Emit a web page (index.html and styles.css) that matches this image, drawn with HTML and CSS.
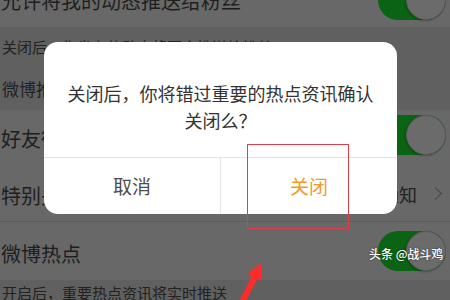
FILE: index.html
```html
<!DOCTYPE html>
<html lang="zh-CN">
<head>
<meta charset="utf-8">
<title>设置</title>
<link rel="stylesheet" href="styles.css">
</head>
<body>
<div class="screen">
  <div class="list">
    <div class="row row-top">
      <span class="title">允许将我的动态推送给粉丝</span>
      <span class="toggle"><span class="knob"></span></span>
    </div>
    <div class="note note-top">关闭后，你发布的动态将不会推送给粉丝</div>
    <div class="header">微博推送设置</div>
    <div class="row row-friend">
      <span class="title">好友微博</span>
      <span class="toggle"><span class="knob"></span></span>
    </div>
    <div class="row row-special">
      <span class="title">特别关注</span>
      <span class="extra">新微博通知<span class="chev"></span></span>
    </div>
    <div class="row row-hot">
      <span class="title">微博热点</span>
      <span class="toggle"><span class="knob"></span></span>
    </div>
    <div class="note note-bottom">开启后，重要热点资讯将实时推送</div>
  </div>

  <div class="dialog">
    <div class="message">关闭后，你将错过重要的热点资讯确认<br>关闭么？</div>
    <div class="actions">
      <div class="btn btn-cancel">取消</div>
      <div class="btn btn-ok">关闭</div>
    </div>
  </div>

  <div class="mark-box"></div>
  <svg class="arrow" width="450" height="300" viewBox="0 0 450 300">
    <line x1="254.7" y1="277.2" x2="239" y2="308" stroke="#ff2b2b" stroke-width="6"/>
    <polygon points="262,262 261.5,281 247.5,274" fill="#ff2b2b"/>
  </svg>
  <div class="watermark">头条 @战斗鸡</div>
</div>
</body>
</html>
```
FILE: styles.css
```css
html, body {
  margin: 0;
  padding: 0;
}
body {
  width: 450px;
  height: 300px;
  overflow: hidden;
  background: #666;
  font-family: "Noto Sans CJK SC", "Noto Sans", sans-serif;
}
.screen {
  position: relative;
  width: 450px;
  height: 300px;
  overflow: hidden;
}
.list {
  display: flex;
  flex-direction: column;
  margin-top: -27px;
}
.row {
  display: flex;
  align-items: center;
  justify-content: space-between;
  padding: 0 4px 0 1px;
  background: #686868;
  color: #1e1e1e;
}
.title {
  font-size: 20px;
  line-height: 24px;
}
.row-top { height: 54px; }
.row-top .title { margin-top: 2px; }
.row-friend { height: 50px; }
.row-friend .title { margin-top: 8px; }
.row-special { height: 61px; border-bottom: 1px solid #5c5c5c; }
.row-special .title { margin-top: 10px; }
.row-hot { height: 58px; }
.row-hot .title { margin-top: 6px; }
.note {
  background: #606060;
  color: #222;
  font-size: 15px;
  line-height: 18px;
  padding-left: 2px;
}
.note-top { height: 41px; padding-top: 11px; box-sizing: border-box; }
.header {
  background: #606060;
  color: #222;
  font-size: 17px;
  height: 42px;
  line-height: 42px;
  padding-left: 2px;
}
.note-bottom { height: 40px; padding-top: 4px; box-sizing: border-box; }
.toggle {
  position: relative;
  width: 68px;
  height: 40px;
  border-radius: 20px;
  background: #0b6414;
  flex: none;
}
.knob {
  position: absolute;
  right: 0;
  top: 0;
  width: 40px;
  height: 40px;
  box-sizing: border-box;
  border-radius: 50%;
  background: #6b6b6b;
  border: 1px solid #5a5a5a;
  box-shadow: -1px 1px 2px rgba(0,0,0,0.25);
}
.extra {
  font-size: 18px;
  color: #222;
  display: flex;
  align-items: center;
  margin-top: 6px;
  margin-right: 6px;
}
.chev {
  width: 8px;
  height: 8px;
  border-top: 1.5px solid #444;
  border-right: 1.5px solid #444;
  transform: rotate(45deg);
  margin-left: 14px;
}
.dialog {
  position: absolute;
  left: 44px;
  top: 42px;
  width: 353px;
  height: 172px;
  background: #fff;
  border-radius: 14px;
  display: flex;
  flex-direction: column;
  overflow: hidden;
}
.message {
  height: 115px;
  box-sizing: border-box;
  padding-top: 38px;
  text-align: center;
  font-size: 18px;
  line-height: 27px;
  color: #333;
}
.actions {
  flex: 1;
  display: flex;
  border-top: 1px solid #e3e3e3;
}
.btn {
  display: flex;
  align-items: center;
  justify-content: center;
  font-size: 19px;
  padding-bottom: 2px;
}
.btn-cancel {
  width: 176px;
  border-right: 1px solid #e3e3e3;
  color: #4d4d4d;
}
.btn-ok {
  flex: 1;
  color: #f29a2b;
}
.mark-box {
  position: absolute;
  left: 247px;
  top: 144px;
  width: 102px;
  height: 85px;
  box-sizing: border-box;
  border: 1.5px solid #dc3f49;
}
.arrow {
  position: absolute;
  left: 0;
  top: 0;
}
.watermark {
  position: absolute;
  left: 369px;
  top: 246px;
  font-size: 12px;
  line-height: 16px;
  color: #fff;
  font-weight: 500;
  text-shadow: 0 0 2px rgba(0,0,0,0.6);
  white-space: nowrap;
}
```
